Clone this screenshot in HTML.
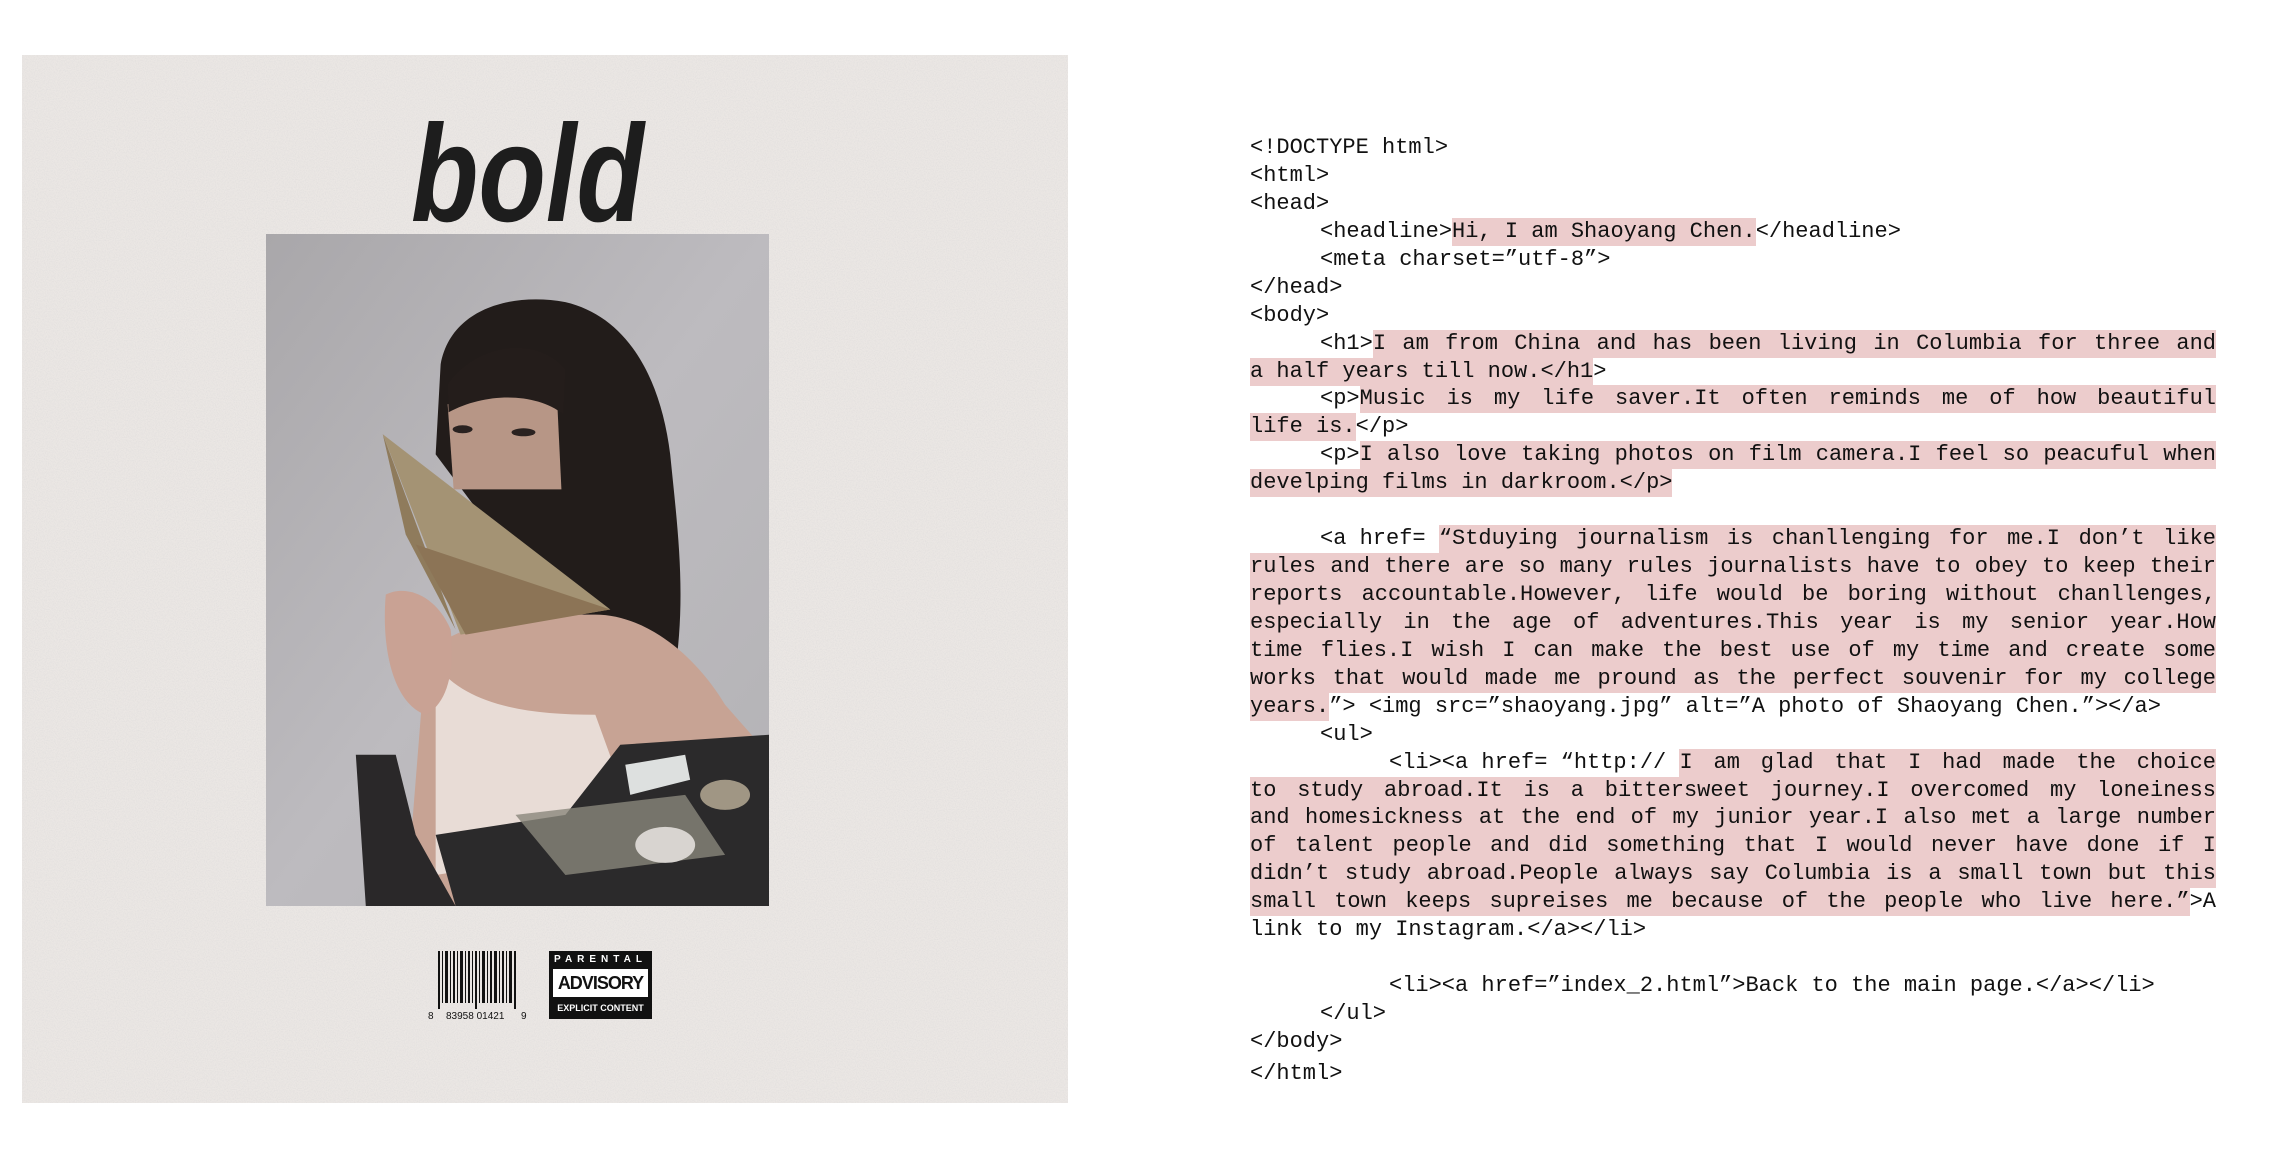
<!DOCTYPE html>
<html><head><meta charset="utf-8"><style>
html,body{margin:0;padding:0;background:#fff;width:2276px;height:1158px;overflow:hidden;position:relative}
.cover{position:absolute;left:22px;top:55px;width:1046px;height:1048px;background:#ebe7e4;overflow:hidden}
.bold{position:absolute;left:389px;top:50px;font-family:"Liberation Sans",sans-serif;font-weight:bold;font-style:italic;font-size:138px;color:#1d1d1d;line-height:1;transform:scaleX(0.8);transform-origin:left top;white-space:nowrap}
.photo{position:absolute;left:244px;top:179px;width:503px;height:672px}
.code{position:absolute;left:1250px;top:3px;width:966px;font-family:"Liberation Mono",monospace;font-size:22px;color:#111}
.r{position:absolute;left:0;width:966px;height:28px;line-height:28px;display:flex;white-space:nowrap}
.i1{padding-left:70px;box-sizing:border-box}
.i2{padding-left:139px;box-sizing:border-box}
.h{background:#eccccc}
.j{flex:1;text-align:justify;text-align-last:justify}
.adv{position:absolute;left:527px;top:896px;width:103px;height:68px;background:#111;color:#fff;font-family:'Liberation Sans',sans-serif;font-weight:bold;overflow:hidden}
.adv div{position:absolute;left:0;width:103px;text-align:center;white-space:nowrap}
</style></head><body>
<div class="cover">
<svg width="1046" height="1048" style="position:absolute;left:0;top:0"><filter id="n"><feTurbulence type="fractalNoise" baseFrequency="0.9" numOctaves="2" seed="3"/><feColorMatrix type="matrix" values="0 0 0 0 0.6  0 0 0 0 0.6  0 0 0 0 0.62  0 0 0 1.2 -0.45"/></filter><rect width="1046" height="1048" filter="url(#n)" opacity="0.5"/></svg>
<div class="bold">bold</div>
<svg class="photo" viewBox="0 0 504 671" preserveAspectRatio="none">
<defs><linearGradient id="bg" x1="0" y1="0" x2="1" y2="1"><stop offset="0" stop-color="#a9a7aa"/><stop offset="0.5" stop-color="#bdbbbf"/><stop offset="1" stop-color="#b3b2b5"/></linearGradient></defs>
<rect width="504" height="671" fill="url(#bg)"/>
<path d="M175 130 C185 75 245 58 300 68 C360 82 395 140 405 220 C412 290 420 350 412 420 L330 420 L230 300 L170 220 Z" fill="#221c1a"/>
<path d="M182 170 C215 158 260 160 292 172 L296 255 L188 255 Z" fill="#b79686"/>
<path d="M182 150 C210 110 270 100 300 135 L298 180 C270 158 220 158 183 178 Z" fill="#241d1b"/>
<ellipse cx="197" cy="195" rx="10" ry="4" fill="#2a2220"/><ellipse cx="258" cy="198" rx="12" ry="4" fill="#2a2220"/>
<path d="M330 380 C380 380 430 420 460 470 L504 520 L504 671 L140 671 L160 420 C200 380 280 380 330 380 Z" fill="#c7a394"/>
<path d="M170 430 C200 470 260 480 330 480 L370 590 L300 620 L170 640 Z" fill="#e8dcd6"/>
<path d="M117 200 L345 375 L195 400 Z" fill="#a49374"/>
<path d="M117 200 L190 395 L140 300 Z" fill="#8f7b5c"/>
<path d="M150 310 L345 375 L200 400 Z" fill="#8c7456"/>
<path d="M120 360 C140 350 170 360 185 395 C190 440 180 470 160 480 C130 470 115 420 120 360 Z" fill="#c9a294"/>
<path d="M355 510 L504 500 L504 671 L190 671 L170 600 L300 580 Z" fill="#2b2a2b"/>
<path d="M90 520 L130 520 L150 600 L190 671 L100 671 Z" fill="#2a2829"/>
<path d="M250 580 L420 560 L460 620 L300 640 Z" fill="#8a877c" opacity="0.8"/>
<path d="M360 530 L420 520 L425 545 L365 560 Z" fill="#dde0df"/>
<ellipse cx="400" cy="610" rx="30" ry="18" fill="#d8d4d0"/>
<ellipse cx="460" cy="560" rx="25" ry="15" fill="#a09684"/>
</svg>
<svg style="position:absolute;left:406px;top:896px" width="102" height="74">
<g fill="#111">
<rect x="10" y="0" width="2" height="58"/><rect x="14" y="0" width="1" height="52"/><rect x="17" y="0" width="3" height="52"/><rect x="22" y="0" width="1" height="52"/><rect x="25" y="0" width="2" height="52"/><rect x="29" y="0" width="1" height="52"/><rect x="32" y="0" width="3" height="52"/><rect x="37" y="0" width="1" height="52"/><rect x="40" y="0" width="2" height="52"/><rect x="44" y="0" width="1" height="52"/><rect x="47" y="0" width="2" height="58"/><rect x="51" y="0" width="1" height="52"/><rect x="54" y="0" width="3" height="52"/><rect x="59" y="0" width="1" height="52"/><rect x="62" y="0" width="2" height="52"/><rect x="66" y="0" width="3" height="52"/><rect x="71" y="0" width="1" height="52"/><rect x="74" y="0" width="2" height="52"/><rect x="78" y="0" width="1" height="52"/><rect x="81" y="0" width="3" height="52"/><rect x="86" y="0" width="2" height="58"/>
<text x="0" y="68" font-family="Liberation Sans" font-size="10">8</text><text x="18" y="68" font-family="Liberation Sans" font-size="10">83958 01421</text><text x="93" y="68" font-family="Liberation Sans" font-size="10">9</text></g></svg>
<div class="adv">
<div style="top:2px;font-size:10px;letter-spacing:5px;line-height:14px">PARENTAL</div>
<div style="top:18px;left:4px;width:95px;background:#fff;color:#111;font-size:18px;line-height:28px;letter-spacing:-1px">ADVISORY</div>
<div style="top:48px;font-size:9px;line-height:18px">EXPLICIT CONTENT</div></div>
</div>
<div class="code">
<div class="r" style="top:131px">&lt;!DOCTYPE html&gt;</div>
<div class="r" style="top:159px">&lt;html&gt;</div>
<div class="r" style="top:187px">&lt;head&gt;</div>
<div class="r i1" style="top:215px"><span>&lt;headline&gt;</span><span class="h">Hi, I am Shaoyang Chen.</span><span>&lt;/headline&gt;</span></div>
<div class="r i1" style="top:243px">&lt;meta charset=”utf-8”&gt;</div>
<div class="r" style="top:271px">&lt;/head&gt;</div>
<div class="r" style="top:299px">&lt;body&gt;</div>
<div class="r i1" style="top:327px"><span>&lt;h1&gt;</span><span class="h j">I am from China and has been living in Columbia for three and</span></div>
<div class="r" style="top:355px"><span class="h">a half years till now.&lt;/h1</span><span>&gt;</span></div>
<div class="r i1" style="top:382px"><span>&lt;p&gt;</span><span class="h j">Music is my life saver.It often reminds me of how beautiful</span></div>
<div class="r" style="top:410px"><span class="h">life is.</span><span>&lt;/p&gt;</span></div>
<div class="r i1" style="top:438px"><span>&lt;p&gt;</span><span class="h j">I also love taking photos on film camera.I feel so peacuful when</span></div>
<div class="r" style="top:466px"><span class="h">develping films in darkroom.&lt;/p&gt;</span></div>
<div class="r i1" style="top:522px"><span>&lt;a href=&nbsp;</span><span class="h j">“Stduying journalism is chanllenging for me.I don’t like</span></div>
<div class="r" style="top:550px"><span class="h j">rules and there are so many rules journalists have to obey to keep their</span></div>
<div class="r" style="top:578px"><span class="h j">reports accountable.However, life would be boring without chanllenges,</span></div>
<div class="r" style="top:606px"><span class="h j">especially in the age of adventures.This year is my senior year.How</span></div>
<div class="r" style="top:634px"><span class="h j">time flies.I wish I can make the best use of my time and create some</span></div>
<div class="r" style="top:662px"><span class="h j">works that would made me pround as the perfect souvenir for my college</span></div>
<div class="r" style="top:690px"><span class="h">years.</span><span>”&gt; &lt;img src=”shaoyang.jpg” alt=”A photo of Shaoyang Chen.”&gt;&lt;/a&gt;</span></div>
<div class="r i1" style="top:718px">&lt;ul&gt;</div>
<div class="r i2" style="top:746px"><span>&lt;li&gt;&lt;a href= “http://&nbsp;</span><span class="h j">I am glad that I had made the choice</span></div>
<div class="r" style="top:774px"><span class="h j">to study abroad.It is a bittersweet journey.I overcomed my loneiness</span></div>
<div class="r" style="top:801px"><span class="h j">and homesickness at the end of my junior year.I also met a large number</span></div>
<div class="r" style="top:829px"><span class="h j">of talent people and did something that I would never have done if I</span></div>
<div class="r" style="top:857px"><span class="h j">didn’t study abroad.People always say Columbia is a small town but this</span></div>
<div class="r" style="top:885px"><span class="h j">small town keeps supreises me because of the people who live here.”</span><span>&gt;A</span></div>
<div class="r" style="top:913px">link to my Instagram.&lt;/a&gt;&lt;/li&gt;</div>
<div class="r i2" style="top:969px">&lt;li&gt;&lt;a href=”index_2.html”&gt;Back to the main page.&lt;/a&gt;&lt;/li&gt;</div>
<div class="r i1" style="top:997px">&lt;/ul&gt;</div>
<div class="r" style="top:1025px">&lt;/body&gt;</div>
<div class="r" style="top:1057px">&lt;/html&gt;</div>
</div>
</body></html>
